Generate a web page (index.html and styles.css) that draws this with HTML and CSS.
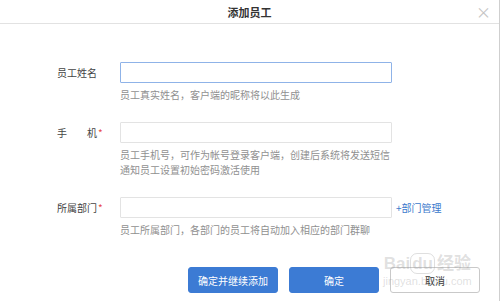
FILE: index.html
```html
<!DOCTYPE html>
<html lang="zh-CN">
<head>
    <meta charset="UTF-8">
    <meta name="viewport" content="width=device-width, initial-scale=1.0">
    <title>添加员工</title>
    <link rel="stylesheet" href="styles.css">
</head>
<body>
    <div class="dialog">
        <div class="dialog-header">
            <h1>添加员工</h1>
            <span class="close-btn">×</span>
        </div>

        <form class="dialog-form">
            <div class="form-row">
                <label class="form-label" for="name">员工姓名</label>
                <div class="form-field">
                    <input type="text" class="form-input focused" id="name">
                    <p class="form-help">员工真实姓名，客户端的昵称将以此生成</p>
                </div>
            </div>

            <div class="form-row">
                <label class="form-label" for="phone">手&emsp;&emsp;机<span class="required">*</span></label>
                <div class="form-field">
                    <input type="text" class="form-input" id="phone">
                    <p class="form-help">员工手机号，可作为帐号登录客户端，创建后系统将发送短信<br>通知员工设置初始密码激活使用</p>
                </div>
            </div>

            <div class="form-row">
                <label class="form-label" for="dept">所属部门<span class="required">*</span></label>
                <div class="form-field">
                    <div class="input-line">
                        <input type="text" class="form-input" id="dept">
                        <a class="dept-link">+部门管理</a>
                    </div>
                    <p class="form-help">员工所属部门，各部门的员工将自动加入相应的部门群聊</p>
                </div>
            </div>

            <div class="form-actions">
                <button type="button" class="btn btn-primary">确定并继续添加</button>
                <button type="button" class="btn btn-primary">确定</button>
                <button type="button" class="btn btn-default">取消</button>
            </div>
        </form>

        <div class="watermark">
            <span class="wm-logo">Bai<span class="wm-du">du</span>经验</span>
            <span class="wm-url">jingyan.baidu.com</span>
        </div>
    </div>
</body>
</html>
```

FILE: styles.css
```css
* {
    margin: 0;
    padding: 0;
    box-sizing: border-box;
}

body {
    font-family: "Noto Sans CJK SC", "Noto Sans", sans-serif;
    background: #fff;
    color: #444;
}

.dialog {
    position: relative;
    width: 500px;
    height: 301px;
    border-right: 1px solid #cfcfcf;
    overflow: hidden;
}

.dialog-header {
    position: relative;
    height: 24px;
    border-bottom: 1px solid #e2e2e2;
    text-align: center;
}

.dialog-header h1 {
    font-size: 11px;
    font-weight: bold;
    line-height: 24px;
    color: #333;
}

.close-btn {
    position: absolute;
    right: 8px;
    top: 4px;
    font-size: 15px;
    line-height: 15px;
    color: #c4c4c4;
}

.dialog-form {
    padding-top: 38px;
}

.form-row {
    display: flex;
    margin-bottom: 20px;
}

.form-label {
    width: 120px;
    padding-left: 57px;
    height: 21px;
    line-height: 21px;
    font-size: 10px;
    color: #444;
}

.required {
    color: #e84a4a;
    margin-left: 1px;
}

.input-line {
    display: flex;
    align-items: center;
    gap: 4px;
}

.form-input {
    display: block;
    width: 272px;
    height: 21px;
    border: 1px solid #e3e3e3;
    border-radius: 1px;
    outline: none;
    font-size: 10px;
}

.form-input.focused {
    border-color: #8fb3e8;
}

.dept-link {
    font-size: 10px;
    color: #3a78cc;
}

.form-help {
    margin-top: 4px;
    font-size: 10px;
    line-height: 15px;
    color: #909090;
}

.form-actions {
    display: flex;
    justify-content: flex-end;
    gap: 11px;
    padding-right: 19px;
    margin-top: 30px;
}

.btn {
    width: 90px;
    height: 26px;
    border-radius: 3px;
    font-family: inherit;
    font-size: 10px;
    cursor: pointer;
}

.btn-primary {
    background: #3c7bd4;
    border: 1px solid #3c7bd4;
    color: #fff;
}

.btn-default {
    background: #fff;
    border: 1px solid #c9c9c9;
    color: #333;
}

.watermark {
    position: absolute;
    left: 383px;
    top: 254px;
    display: flex;
    flex-direction: column;
    align-items: center;
    color: rgba(150, 150, 150, 0.3);
    pointer-events: none;
}

.wm-logo {
    font-family: "Liberation Sans", "Noto Sans CJK SC", sans-serif;
    font-size: 17px;
    font-weight: bold;
    line-height: 20px;
}

.wm-du {
    border: 1px solid rgba(150, 150, 150, 0.3);
    border-radius: 7px;
    padding: 0 1px;
    margin-right: 2px;
}

.wm-url {
    font-family: "Liberation Sans", sans-serif;
    font-size: 11px;
    line-height: 14px;
}
```
